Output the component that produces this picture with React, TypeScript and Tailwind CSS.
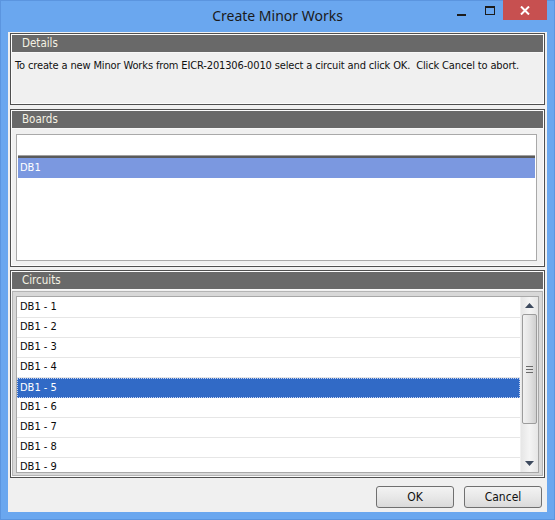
import React from "react";

const F = { fontFamily: '"DejaVu Sans Condensed", "DejaVu Sans", sans-serif' };

function GroupHeader({ title }: { title: string }) {
  return (
    <div className="h-[18px] bg-[#696969] border-b border-[#f8f8f8] flex items-center pl-[10px] text-[11.5px] text-[#f4f2e4] leading-none">
      {title}
    </div>
  );
}

function Arrow({ up }: { up: boolean }) {
  return (
    <svg width="9" height="5" viewBox="0 0 9 5">
      {up ? <polygon points="0,5 4.5,0 9,5" fill="#3d4a5e" /> : <polygon points="0,0 4.5,5 9,0" fill="#3d4a5e" />}
    </svg>
  );
}

export default function App() {
  const circuits = Array.from({ length: 9 }, (_, i) => `DB1 - ${i + 1}`);
  return (
    <div className="w-[555px] h-[520px] bg-[#6aa7ef] border border-[#5b95df] flex flex-col" style={F}>
      {/* Title bar */}
      <div className="h-[31px] grid grid-cols-[1fr_auto_1fr] shrink-0">
        <div />
        <div
          className="pt-[5px] text-[14px] text-[#1a1a1a] leading-[20px]"
          style={{ fontFamily: '"Noto Sans", "Open Sans", sans-serif' }}
        >
          Create Minor Works
        </div>
        <div className="flex justify-end items-start pr-[7px]">
          <div className="w-[26px] h-[20px] flex items-center justify-center mr-[3px]">
            <div className="w-[9px] h-[2px] bg-[#1c1c1c] mt-[7px]" />
          </div>
          <div className="w-[26px] h-[20px] flex items-center justify-center">
            <div className="w-[10px] h-[9px] border border-t-2 border-[#1c1c1c] -mt-[1px]" />
          </div>
          <div className="w-[44px] h-[20px] bg-[#c75050] -mt-[1px] flex items-center justify-center">
            <svg width="10" height="9" viewBox="0 0 10 9">
              <path d="M1 0.5 L9 8.5 M9 0.5 L1 8.5" stroke="#ffffff" strokeWidth="2" />
            </svg>
          </div>
        </div>
      </div>

      {/* Client area */}
      <div className="flex-1 mx-[7px] mb-[7px] bg-[#f0f0f0] flex flex-col px-[2px] pt-[1px]">
        {/* Details */}
        <div className="h-[72px] border border-[#4f4f4f] shrink-0">
          <div className="h-full border border-[#fcfcfc] flex flex-col">
            <GroupHeader title="Details" />
            <div className="pl-[3px] pt-[6px] text-[11px] tracking-[-0.14px] text-[#111] leading-[14px] whitespace-pre">
              To create a new Minor Works from EICR-201306-0010 select a circuit and click OK.  Click Cancel to abort.
            </div>
          </div>
        </div>

        {/* Boards */}
        <div className="h-[158px] border border-[#4f4f4f] mt-[4px] shrink-0">
          <div className="h-full border border-[#fcfcfc] flex flex-col">
            <GroupHeader title="Boards" />
            <div className="flex-1 pt-[5px] pb-[4px] pl-[4px] pr-[6px] flex">
              <div className="flex-1 border border-[#a9a9a9] bg-white flex flex-col px-[1px]">
                <div className="h-[20px]" />
                <div className="h-[3px] border-t border-[#a0a0a0] border-b-2 border-b-[#5a5a5a]" />
                <div className="h-[20px] bg-[#7b98e0] text-white text-[11px] flex items-center pl-[2px]">DB1</div>
              </div>
            </div>
          </div>
        </div>

        {/* Circuits */}
        <div className="h-[208px] border border-[#4f4f4f] mt-[3px] shrink-0">
          <div className="h-full border border-[#fcfcfc] flex flex-col">
            <GroupHeader title="Circuits" />
            <div className="flex-1 mt-[1px] bg-[#d8d8d8] border border-[#b4b4b4] pt-[4px] px-[3px] pb-[2px] flex min-h-0">
              <div className="flex-1 border border-[#a8a8a8] bg-white flex min-h-0">
                <div className="flex-1 overflow-hidden pt-[1px]">
                  {circuits.map((c) =>
                    c === "DB1 - 5" ? (
                      <div
                        key={c}
                        className="h-[20px] bg-[#316ac6] text-white text-[11px] flex items-center pl-[2px] border border-dotted border-[#c8d4f0]"
                      >
                        {c}
                      </div>
                    ) : (
                      <div
                        key={c}
                        className="h-[20px] border-b border-[#e6e6e6] text-[#0a0a0a] text-[11px] flex items-center pl-[3px]"
                      >
                        {c}
                      </div>
                    )
                  )}
                </div>
                {/* Scrollbar */}
                <div className="w-[18px] bg-gradient-to-r from-[#e6e6e6] via-[#f4f4f4] to-[#e6e6e6] flex flex-col items-center border-l border-[#f0f0f0]">
                  <div className="h-[17px] flex items-center justify-center">
                    <Arrow up />
                  </div>
                  <div className="w-[15px] h-[110px] rounded-[2px] border border-[#9c9c9c] bg-gradient-to-r from-[#f2f2f2] via-[#e4e4e4] to-[#cfcfcf] flex flex-col items-center justify-center gap-[2px]">
                    <div className="w-[7px] h-[1px] bg-[#6a6a6a]" />
                    <div className="w-[7px] h-[1px] bg-[#6a6a6a]" />
                    <div className="w-[7px] h-[1px] bg-[#6a6a6a]" />
                  </div>
                  <div className="flex-1" />
                  <div className="h-[17px] flex items-center justify-center">
                    <Arrow up={false} />
                  </div>
                </div>
              </div>
            </div>
          </div>
        </div>

        {/* Buttons */}
        <div className="flex-1 flex justify-end items-start pt-[8px] pr-[3px] gap-[10px]">
          <button className="w-[78px] h-[22px] rounded-[3px] border border-[#707070] bg-gradient-to-b from-[#f3f3f3] via-[#e8e8e8] to-[#dadada] text-[12px] text-[#111] leading-none">
            OK
          </button>
          <button className="w-[78px] h-[22px] rounded-[3px] border border-[#707070] bg-gradient-to-b from-[#f3f3f3] via-[#e8e8e8] to-[#dadada] text-[12px] text-[#111] leading-none">
            Cancel
          </button>
        </div>
      </div>
    </div>
  );
}
